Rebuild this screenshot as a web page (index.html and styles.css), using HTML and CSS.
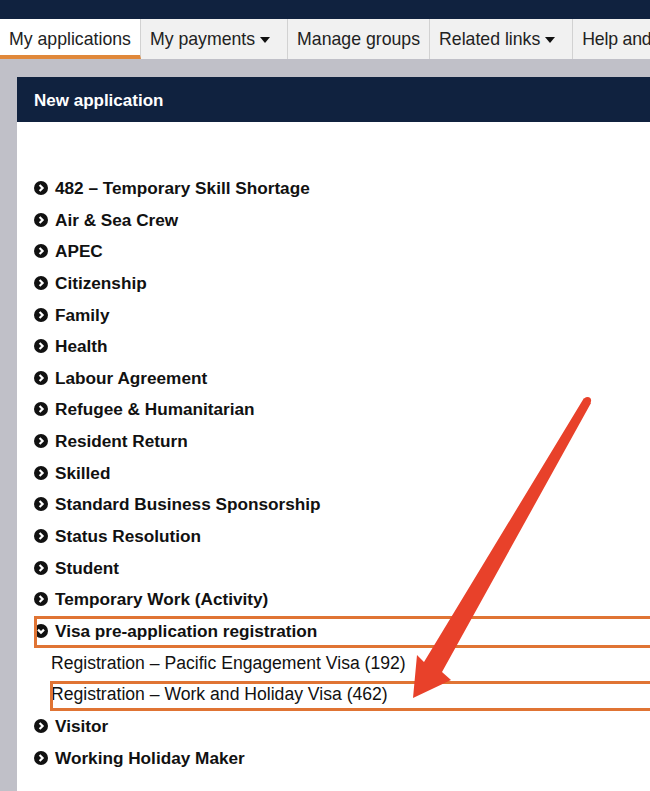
FILE: index.html
```html
<!DOCTYPE html>
<html lang="en">

<head>
    <meta charset="UTF-8">
    <meta name="viewport" content="width=device-width, initial-scale=1.0">
    <title>New application</title>
    <link rel="stylesheet" href="styles.css">
</head>

<body>
    <div class="page">
        <div class="topbar"></div>

        <ul class="tabs">
            <li class="active"><a href="#">My applications</a></li>
            <li class="dropdown"><a href="#">My payments</a></li>
            <li><a href="#">Manage groups</a></li>
            <li class="dropdown"><a href="#">Related links</a></li>
            <li class="last"><a href="#">Help and</a></li>
        </ul>

        <div class="main">
            <div class="panel">
                <h2 class="panel-title">New application</h2>
                <ul class="categories">
                    <li>482 – Temporary Skill Shortage</li>
                    <li>Air &amp; Sea Crew</li>
                    <li>APEC</li>
                    <li>Citizenship</li>
                    <li>Family</li>
                    <li>Health</li>
                    <li>Labour Agreement</li>
                    <li>Refugee &amp; Humanitarian</li>
                    <li>Resident Return</li>
                    <li>Skilled</li>
                    <li>Standard Business Sponsorship</li>
                    <li>Status Resolution</li>
                    <li>Student</li>
                    <li>Temporary Work (Activity)</li>
                    <li class="open marked">Visa pre-application registration</li>
                    <li class="sub">Registration – Pacific Engagement Visa (192)</li>
                    <li class="sub marked">Registration – Work and Holiday Visa (462)</li>
                    <li>Visitor</li>
                    <li>Working Holiday Maker</li>
                </ul>
            </div>
        </div>

        <!-- annotation arrow -->
        <svg class="arrow" width="650" height="791" viewBox="0 0 650 791">
            <circle cx="587.5" cy="400.5" r="3.6" fill="#e8412a" />
            <polygon fill="#e8412a" points="584,398 424,662 417,655 413,698 451,680 442,672 591,403" />
        </svg>
    </div>
</body>

</html>
```

FILE: styles.css
```css
* {
    padding: 0;
    margin: 0;
    box-sizing: border-box;
}

html,
body {
    overflow: hidden;
}

body {
    font-family: "Liberation Sans", Arial, sans-serif;
    background: #c0c0c8;
}

.page {
    width: 800px;
    height: 791px;
    position: relative;
}

.topbar {
    height: 19px;
    background: #10223f;
}

/* Tabs */
.tabs {
    display: flex;
    height: 40px;
    list-style: none;
    background: #f1f1f1;
}

.tabs li {
    border-right: 1px solid #d2d2d2;
}

.tabs a {
    display: block;
    height: 40px;
    line-height: 41px;
    padding: 0 9px;
    font-size: 17.7px;
    color: #222;
    text-decoration: none;
    white-space: nowrap;
}

.tabs .active {
    background: #fff;
    border-bottom: 4px solid #e0883a;
}

.tabs .active a {
    height: 36px;
}

.tabs .dropdown a {
    padding-right: 17px;
}

.tabs .last a {
    padding-right: 0;
    letter-spacing: -0.2px;
}

.tabs .dropdown a::after {
    content: "";
    display: inline-block;
    margin-left: 5px;
    vertical-align: middle;
    border-left: 5px solid transparent;
    border-right: 5px solid transparent;
    border-top: 6px solid #111;
}

/* Panel */
.main {
    padding: 18px 0 0 17px;
}

.panel {
    background: #fff;
    height: 720px;
}

.panel-title {
    height: 45px;
    line-height: 48px;
    padding-left: 17px;
    background: #10223f;
    color: #fff;
    font-size: 17px;
    font-weight: bold;
}

.categories {
    list-style: none;
    padding: 51px 0 0 17px;
}

.categories li {
    position: relative;
    height: 31.65px;
    line-height: 31.65px;
    font-size: 17.2px;
    font-weight: bold;
    color: #111;
    white-space: nowrap;
}

.categories li::before {
    content: "";
    display: inline-block;
    width: 14px;
    height: 14px;
    margin-right: 7px;
    vertical-align: -1px;
    border-radius: 50%;
    background: #111 no-repeat center / 10px 10px;
    background-image: url("data:image/svg+xml;utf8,<svg xmlns='http://www.w3.org/2000/svg' viewBox='0 0 10 10'><path d='M3.6 2 L6.6 5 L3.6 8' fill='none' stroke='white' stroke-width='2.2'/></svg>");
}

.categories li.open::before {
    background-image: url("data:image/svg+xml;utf8,<svg xmlns='http://www.w3.org/2000/svg' viewBox='0 0 10 10'><path d='M2 3.6 L5 6.6 L8 3.6' fill='none' stroke='white' stroke-width='2.2'/></svg>");
}

.categories li.sub {
    padding-left: 17px;
    font-size: 17.6px;
    font-weight: normal;
}

.categories li.sub::before {
    display: none;
}

/* annotation boxes */
.categories li.marked::after {
    content: "";
    position: absolute;
    top: 0;
    bottom: 0;
    left: 0;
    right: -200px;
    border: 3px solid #e07434;
}

.categories li.sub.marked::after {
    left: 16px;
    top: 2px;
    bottom: 0;
}

.arrow {
    position: absolute;
    top: 0;
    left: 0;
}
```
